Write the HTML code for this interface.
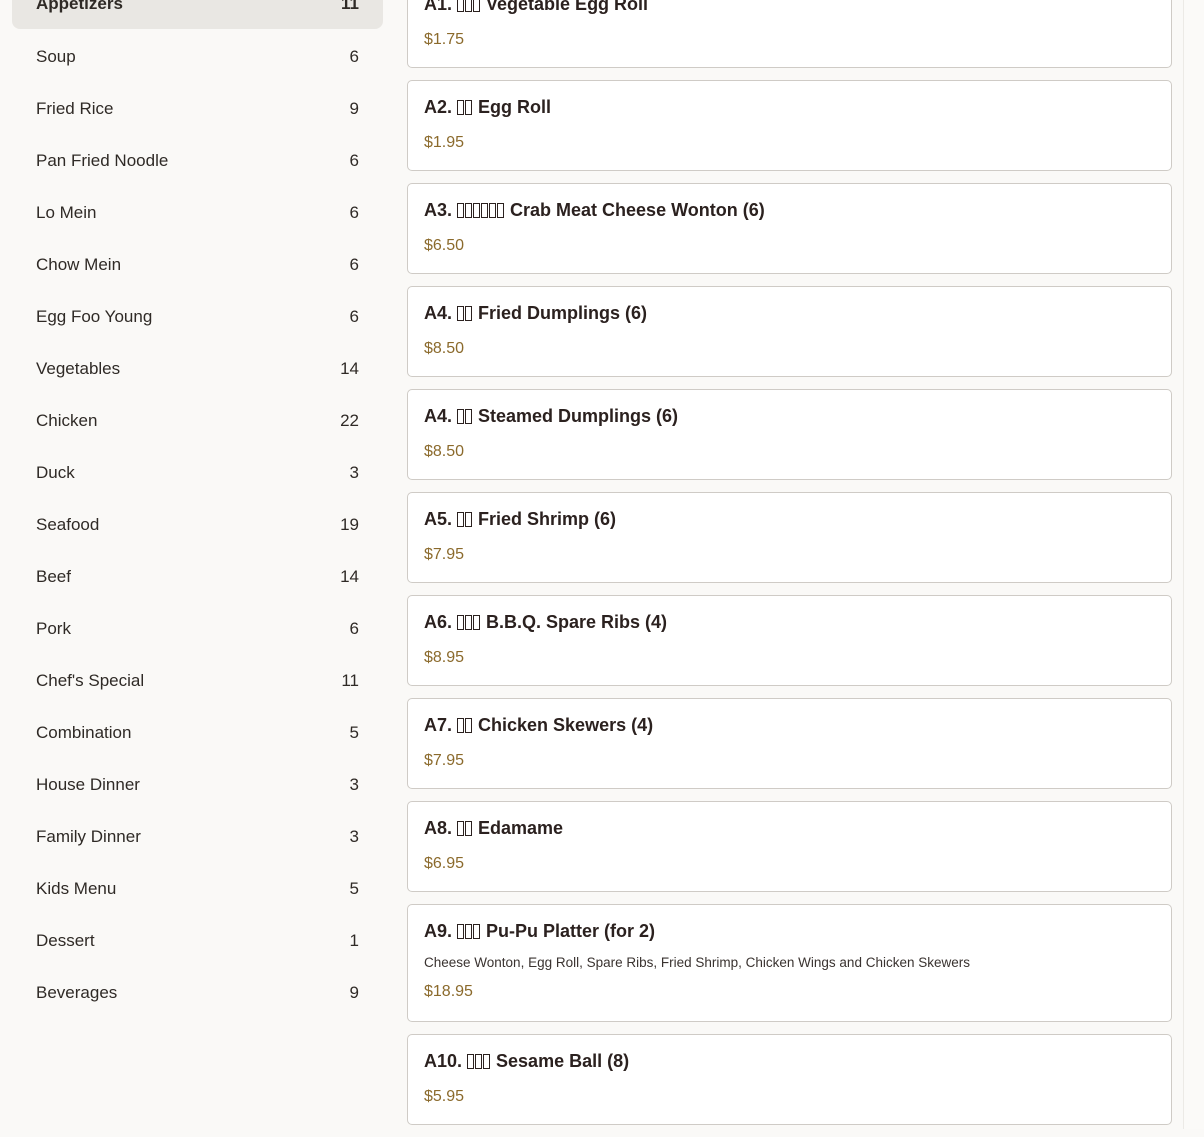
<!DOCTYPE html>
<html><head><meta charset="utf-8"><style>
*{box-sizing:border-box;margin:0;padding:0}
body{width:1204px;height:1129px;overflow:hidden;background:#faf9f7;font-family:"Liberation Sans",sans-serif;position:relative}
.side{position:absolute;left:12px;top:-20px;width:371px}
.row{height:52px;display:flex;justify-content:space-between;align-items:center;padding:0 24px;font-size:17px;color:#2f2a26}
.row.act{background:#e9e7e3;border-radius:8px;font-weight:bold;height:49px;margin-bottom:1px;padding-bottom:2px}
.row.act+.row{margin-top:0}
.main{position:absolute;left:407px;top:-23px;width:765px}
.card{background:#fff;border:1px solid #cfcbc6;border-radius:5px;padding:15px 16px 14px;margin-bottom:12px;height:91px}
.card.tall{height:118px}
.t{font-size:18px;font-weight:bold;color:#2b211f;line-height:22px;height:22px;white-space:nowrap}
.d{font-size:13.5px;color:#3a3330;margin-top:13px;line-height:16px}
.p{font-size:16px;color:#8b6a2c;margin-top:15px;line-height:20px}
.d+.p{margin-top:11px}
.x{display:inline-block;width:7px;height:15px;border:1px solid #2b211f;margin-right:1px;vertical-align:-2px}
.sb{position:absolute;left:1183px;top:0;width:21px;height:1129px;border-left:1px solid #eceae6;background:#fbfaf8}
</style></head><body>
<div class="side">
<div class="row act"><span>Appetizers</span><span>11</span></div>
<div class="row" style="margin-top:2px"><span>Soup</span><span>6</span></div>
<div class="row"><span>Fried Rice</span><span>9</span></div>
<div class="row"><span>Pan Fried Noodle</span><span>6</span></div>
<div class="row"><span>Lo Mein</span><span>6</span></div>
<div class="row"><span>Chow Mein</span><span>6</span></div>
<div class="row"><span>Egg Foo Young</span><span>6</span></div>
<div class="row"><span>Vegetables</span><span>14</span></div>
<div class="row"><span>Chicken</span><span>22</span></div>
<div class="row"><span>Duck</span><span>3</span></div>
<div class="row"><span>Seafood</span><span>19</span></div>
<div class="row"><span>Beef</span><span>14</span></div>
<div class="row"><span>Pork</span><span>6</span></div>
<div class="row"><span>Chef's Special</span><span>11</span></div>
<div class="row"><span>Combination</span><span>5</span></div>
<div class="row"><span>House Dinner</span><span>3</span></div>
<div class="row"><span>Family Dinner</span><span>3</span></div>
<div class="row"><span>Kids Menu</span><span>5</span></div>
<div class="row"><span>Dessert</span><span>1</span></div>
<div class="row"><span>Beverages</span><span>9</span></div>
</div>
<div class="main">
<div class="card"><div class="t">A1. <i class="x"></i><i class="x"></i><i class="x"></i> Vegetable Egg Roll</div><div class="p">$1.75</div></div>
<div class="card"><div class="t">A2. <i class="x"></i><i class="x"></i> Egg Roll</div><div class="p">$1.95</div></div>
<div class="card"><div class="t">A3. <i class="x"></i><i class="x"></i><i class="x"></i><i class="x"></i><i class="x"></i><i class="x"></i> Crab Meat Cheese Wonton (6)</div><div class="p">$6.50</div></div>
<div class="card"><div class="t">A4. <i class="x"></i><i class="x"></i> Fried Dumplings (6)</div><div class="p">$8.50</div></div>
<div class="card"><div class="t">A4. <i class="x"></i><i class="x"></i> Steamed Dumplings (6)</div><div class="p">$8.50</div></div>
<div class="card"><div class="t">A5. <i class="x"></i><i class="x"></i> Fried Shrimp (6)</div><div class="p">$7.95</div></div>
<div class="card"><div class="t">A6. <i class="x"></i><i class="x"></i><i class="x"></i> B.B.Q. Spare Ribs (4)</div><div class="p">$8.95</div></div>
<div class="card"><div class="t">A7. <i class="x"></i><i class="x"></i> Chicken Skewers (4)</div><div class="p">$7.95</div></div>
<div class="card"><div class="t">A8. <i class="x"></i><i class="x"></i> Edamame</div><div class="p">$6.95</div></div>
<div class="card tall"><div class="t">A9. <i class="x"></i><i class="x"></i><i class="x"></i> Pu-Pu Platter (for 2)</div><div class="d">Cheese Wonton, Egg Roll, Spare Ribs, Fried Shrimp, Chicken Wings and Chicken Skewers</div><div class="p">$18.95</div></div>
<div class="card"><div class="t">A10. <i class="x"></i><i class="x"></i><i class="x"></i> Sesame Ball (8)</div><div class="p">$5.95</div></div>
</div>
<div class="sb"></div>
</body></html>
